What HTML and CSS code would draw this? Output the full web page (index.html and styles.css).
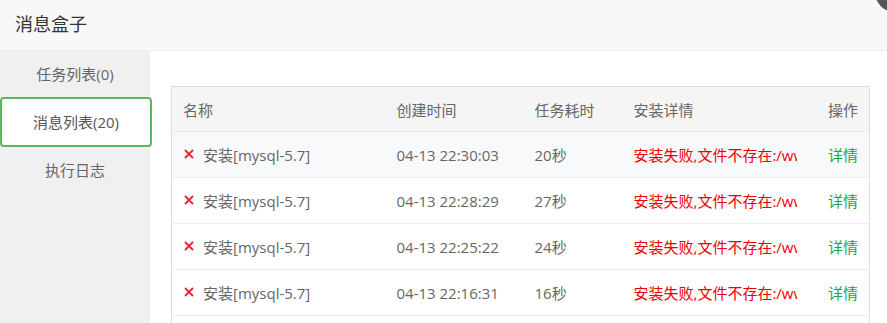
FILE: index.html
```html
<!DOCTYPE html>
<html lang="zh-CN">
<head>
    <meta charset="UTF-8">
    <title>消息盒子</title>
    <link rel="stylesheet" href="styles.css">
</head>
<body>
    <div class="layer">
        <!-- Title bar -->
        <div class="layer-title">消息盒子</div>
        <span class="layer-close"></span>

        <div class="layer-body">
            <!-- Left tabs -->
            <ul class="side-tabs">
                <li>任务列表(0)</li>
                <li class="active">消息列表(20)</li>
                <li>执行日志</li>
            </ul>

            <!-- Message table -->
            <div class="content">
                <table class="msg-table">
                    <colgroup>
                        <col style="width: 214px">
                        <col style="width: 138px">
                        <col style="width: 99px">
                        <col style="width: 185px">
                        <col>
                    </colgroup>
                    <thead>
                        <tr>
                            <th>名称</th>
                            <th>创建时间</th>
                            <th>任务耗时</th>
                            <th>安装详情</th>
                            <th class="right">操作</th>
                        </tr>
                    </thead>
                    <tbody>
                        <tr class="hover">
                            <td><svg class="fail" viewBox="0 0 10 10"><path d="M1 1L9 9M9 1L1 9"/></svg>安装[mysql-5.7]</td>
                            <td>04-13 22:30:03</td>
                            <td>20秒</td>
                            <td><div class="err">安装失败,文件不存在:/www/server/panel/install</div></td>
                            <td class="right"><a href="#" class="link">详情</a></td>
                        </tr>
                        <tr>
                            <td><svg class="fail" viewBox="0 0 10 10"><path d="M1 1L9 9M9 1L1 9"/></svg>安装[mysql-5.7]</td>
                            <td>04-13 22:28:29</td>
                            <td>27秒</td>
                            <td><div class="err">安装失败,文件不存在:/www/server/panel/install</div></td>
                            <td class="right"><a href="#" class="link">详情</a></td>
                        </tr>
                        <tr>
                            <td><svg class="fail" viewBox="0 0 10 10"><path d="M1 1L9 9M9 1L1 9"/></svg>安装[mysql-5.7]</td>
                            <td>04-13 22:25:22</td>
                            <td>24秒</td>
                            <td><div class="err">安装失败,文件不存在:/www/server/panel/install</div></td>
                            <td class="right"><a href="#" class="link">详情</a></td>
                        </tr>
                        <tr>
                            <td><svg class="fail" viewBox="0 0 10 10"><path d="M1 1L9 9M9 1L1 9"/></svg>安装[mysql-5.7]</td>
                            <td>04-13 22:16:31</td>
                            <td>16秒</td>
                            <td><div class="err">安装失败,文件不存在:/www/server/panel/install</div></td>
                            <td class="right"><a href="#" class="link">详情</a></td>
                        </tr>
                        <tr>
                            <td><svg class="fail" viewBox="0 0 10 10"><path d="M1 1L9 9M9 1L1 9"/></svg>安装[mysql-5.7]</td>
                            <td>04-13 22:10:12</td>
                            <td>18秒</td>
                            <td><div class="err">安装失败,文件不存在:/www/server/panel/install</div></td>
                            <td class="right"><a href="#" class="link">详情</a></td>
                        </tr>
                    </tbody>
                </table>
            </div>
        </div>
    </div>
</body>
</html>
```

FILE: styles.css
```css
/* Reset */
* {
    margin: 0;
    padding: 0;
    box-sizing: border-box;
}

body {
    font-family: "Open Sans", "Noto Sans CJK SC", sans-serif;
    font-size: 15px;
    color: #666;
    background: #fff;
    width: 887px;
    height: 323px;
    overflow: hidden;
}

.layer {
    position: relative;
    height: 323px;
}

/* Title bar */
.layer-title {
    height: 51px;
    line-height: 48px;
    padding-left: 15px;
    font-size: 18px;
    color: #333;
    background-color: #f8f8f8;
    border-bottom: 1px solid #eee;
}

.layer-close {
    position: absolute;
    top: -28px;
    right: -28px;
    width: 40px;
    height: 40px;
    border-radius: 50%;
    background-color: #555;
}

.layer-body {
    display: flex;
    height: 272px;
}

/* Side tabs */
.side-tabs {
    list-style: none;
    width: 150px;
    flex-shrink: 0;
    background-color: #f0f0f0;
    position: relative;
    z-index: 1;
}

.side-tabs li {
    height: 48px;
    line-height: 46px;
    text-align: center;
    color: #666;
}

.side-tabs li.active {
    width: 152px;
    height: 50px;
    margin-top: -2px;
    line-height: 46px;
    color: #555;
    background-color: #fff;
    border: 2px solid #5cb85c;
    border-radius: 4px;
}

/* Table */
.content {
    flex: 1;
    padding: 35px 17px 0 21px;
    overflow: hidden;
}

.msg-table {
    width: 699px;
    table-layout: fixed;
    border-collapse: collapse;
    border: 1px solid #ddd;
}

.msg-table th {
    height: 45px;
    padding: 0 11px;
    text-align: left;
    font-weight: normal;
    color: #666;
    background-color: #f5f5f5;
    border-bottom: 1px solid #e8e8e8;
}

.msg-table td {
    height: 46px;
    padding: 0 11px;
    white-space: nowrap;
    border-bottom: 1px solid #eee;
}

.msg-table tr.hover td {
    background-color: #f8f9fa;
}

.msg-table .right {
    text-align: right;
}

.fail {
    width: 10px;
    height: 10px;
    margin: 0 9px 5px 1px;
    vertical-align: middle;
    fill: none;
    stroke: #e8242c;
    stroke-width: 1.8;
}

.err {
    width: 163px;
    overflow: hidden;
    white-space: nowrap;
    color: #ef0000;
}

.link {
    color: #20a53a;
    text-decoration: none;
}
```
